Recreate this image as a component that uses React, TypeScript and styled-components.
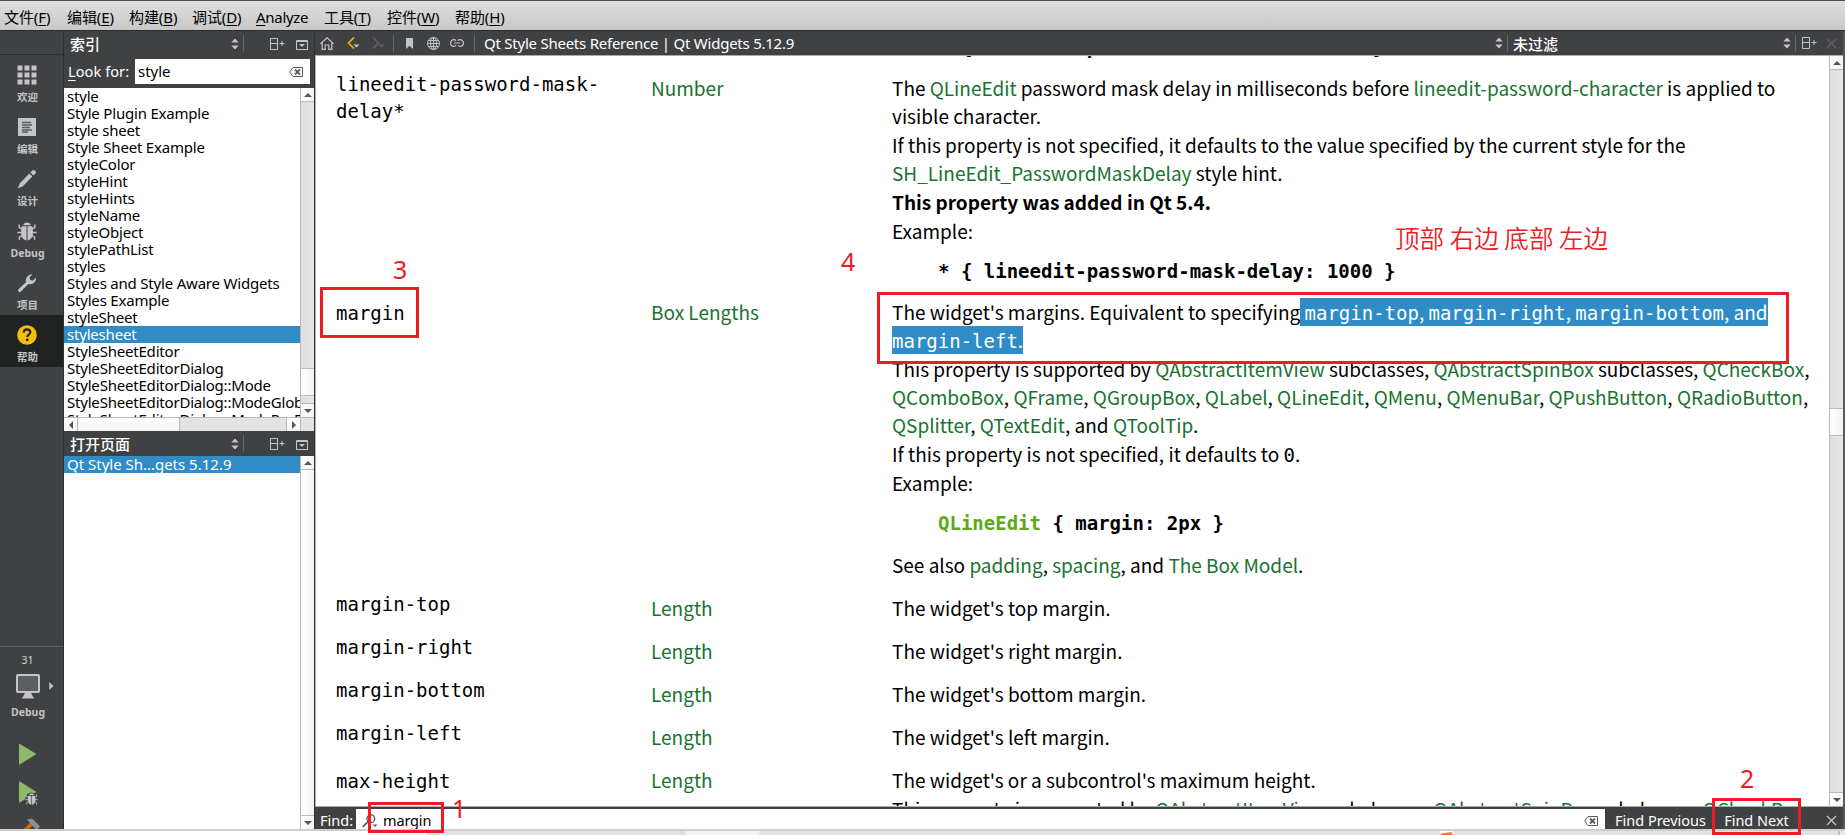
import React from "react";
import styled, { createGlobalStyle, css } from "styled-components";

const UI = `"Noto Sans", "Noto Sans CJK SC", sans-serif`;
const DOC = `"Noto Sans CJK SC", "Noto Sans", sans-serif`;
const MONO = `"DejaVu Sans Mono", "Liberation Mono", monospace`;
const DARK = "#404142";
const BLUE = "#308cc6";
const RED = "#ed1c24";

const GlobalStyle = createGlobalStyle`
  *, *::before, *::after { box-sizing: border-box; }
  html, body { margin: 0; padding: 0; background: #fff; }
  body { overflow: hidden; }
  svg { display: block; flex: none; }
`;

const Screen = styled.div`
  position: relative;
  width: 1845px;
  height: 835px;
  overflow: hidden;
  display: flex;
  flex-direction: column;
  font: 15px/17px ${UI};
  color: #000;
  background: #fff;
`;

/* ---------- menu bar ---------- */

const MenuBar = styled.nav`
  flex: none;
  height: 31px;
  display: flex;
  align-items: center;
  padding: 4px 0 0 4px;
  border-top: 1px solid #534a46;
  border-bottom: 1px solid #2a2b2c;
  background: linear-gradient(#dedede, #c8c8c8);
`;

const MenuItem = styled.span<{ $w: number; $ls?: number }>`
  width: ${(p) => p.$w}px;
  flex: none;
  white-space: nowrap;
  font-size: 15px;
  letter-spacing: ${(p) => p.$ls ?? 0}px;
  u { text-underline-offset: 2px; }
`;

/* ---------- window body ---------- */

const Body = styled.div`
  flex: none;
  height: 798px;
  display: flex;
  background: ${DARK};
  border-right: 2px solid #5b5a59;
`;

const ModeBar = styled.aside`
  flex: none;
  width: 64px;
  display: flex;
  flex-direction: column;
  border-right: 1px solid #2c2d2e;
  overflow: hidden;
`;

const ModeSpacer = styled.div`
  flex: none;
  height: 24px;
  border-bottom: 1px solid #2f3031;
`;

const Mode = styled.div<{ $active?: boolean }>`
  flex: none;
  height: 52px;
  display: flex;
  flex-direction: column;
  align-items: center;
  gap: 4px;
  padding: 10px 9px 0 0;
  background: ${(p) => (p.$active ? "#212322" : "transparent")};
`;

const ModeLabel = styled.span`
  flex: none;
  font-size: 10.5px;
  line-height: 16px;
  font-weight: 700;
  color: #c3c4c6;
  padding-left: 1px;
`;

const KitPanel = styled.div`
  flex: none;
  margin-top: auto;
  height: 183px;
  border-top: 1px solid #5d5e5f;
  display: flex;
  flex-direction: column;
  align-items: center;
  padding: 5px 8px 0 0;
  overflow: hidden;
`;

const KitName = styled.span`
  flex: none;
  font-size: 10.5px;
  line-height: 16px;
  color: #d6d7d8;
`;

const KitRow = styled.div`
  flex: none;
  width: 55px;
  height: 36px;
  display: flex;
  align-items: center;
  justify-content: flex-end;
  gap: 9px;
  padding-right: 1px;
`;

const RunButton = styled.div<{ $h: number }>`
  flex: none;
  height: ${(p) => p.$h}px;
  display: flex;
  align-items: center;
`;

/* ---------- side panel ---------- */

const SidePanel = styled.section`
  flex: none;
  width: 251px;
  display: flex;
  flex-direction: column;
  border-right: 1px solid #2f3132;
`;

const PanelHead = styled.header`
  flex: none;
  height: 25px;
  display: flex;
  align-items: center;
  padding: 0 6px 0 6px;
  color: #fff;
`;

const PanelTitle = styled.span`
  flex: 1;
  font-size: 15px;
  font-weight: 500;
  line-height: 22px;
  padding-top: 1px;
`;

const Divider = styled.i<{ $m?: string }>`
  flex: none;
  width: 1px;
  height: 17px;
  margin: ${(p) => p.$m ?? "0"};
  background: #666769;
`;

const IconSlot = styled.span<{ $m?: string }>`
  flex: none;
  display: flex;
  margin: ${(p) => p.$m ?? "0"};
`;

const LookFor = styled.div`
  flex: none;
  height: 32px;
  display: flex;
  align-items: center;
  padding: 0 4px 1px 4px;
  color: #fff;
  u { text-underline-offset: 3px; }
`;

const LookLabel = styled.label`
  width: 67px;
  font-size: 14.5px;
  letter-spacing: 0.1px;
  white-space: nowrap;
`;

const Field = styled.div`
  flex: 1;
  height: 25px;
  display: flex;
  align-items: center;
  justify-content: space-between;
  padding: 0 7px 0 3px;
  background: #fff;
  color: #000;
`;

const ListFrame = styled.div<{ $h: number }>`
  flex: none;
  height: ${(p) => p.$h}px;
  display: flex;
  background: #fff;
`;

const ListView = styled.div`
  flex: 1;
  min-width: 0;
  overflow: hidden;
`;

const ListItem = styled.div<{ $on?: boolean; $ls?: number }>`
  height: 17px;
  line-height: 17px;
  padding-left: 3px;
  white-space: nowrap;
  letter-spacing: ${(p) => p.$ls ?? -0.2}px;
  ${(p) => p.$on && css`background: ${BLUE}; color: #fff;`}
`;

/* ---------- scroll bars ---------- */

const VBar = styled.div`
  flex: none;
  width: 14px;
  display: flex;
  flex-direction: column;
  border-left: 1px solid #b9b9b9;
  background: linear-gradient(90deg, #dedede, #e6e6e6);
`;

const VButton = styled.div<{ $bottom?: boolean }>`
  flex: none;
  height: 14px;
  display: grid;
  place-items: center;
  background: linear-gradient(90deg, #fff, #f2f2f2);
  ${(p) => (p.$bottom ? "border-top" : "border-bottom")}: 1px solid #b9b9b9;
`;

const VTrack = styled.div<{ $h?: number }>`
  ${(p) => (p.$h ? `flex: none; height: ${p.$h}px;` : "flex: 1;")}
`;

const VThumb = styled.div<{ $h?: number; $plain?: boolean }>`
  ${(p) => (p.$h ? `flex: none; height: ${p.$h}px;` : "flex: 1;")}
  background: linear-gradient(90deg, #fff, #f2f2f2);
  border: solid #b9b9b9;
  border-width: ${(p) => (p.$plain ? "0" : "1px 0")};
`;

const HBar = styled.div`
  flex: none;
  height: 14px;
  display: flex;
  border-top: 1px solid #b9b9b9;
  background: #e3e3e3;
`;

const HPart = styled.div<{ $w: number; $raised?: boolean; $end?: boolean }>`
  flex: none;
  width: ${(p) => p.$w}px;
  display: grid;
  place-items: center;
  ${(p) =>
    p.$raised &&
    css`background: linear-gradient(#fff, #f3f3f3); border-right: 1px solid #b9b9b9;`}
  ${(p) => p.$end && css`border-left: 1px solid #b9b9b9;`}
`;

/* ---------- document ---------- */

const Main = styled.main`
  flex: 1;
  min-width: 0;
  display: flex;
  flex-direction: column;
`;

const Toolbar = styled.header`
  flex: none;
  height: 25px;
  display: flex;
  align-items: center;
  padding-left: 5px;
  color: #fff;
  border-bottom: 1px solid #a9aaaa;
`;

const PageTitle = styled.span<{ $ls?: number }>`
  flex: 1;
  font-size: 15px;
  line-height: 20px;
  white-space: nowrap;
  letter-spacing: ${(p) => p.$ls ?? 0}px;
`;

const FilterTitle = styled(PageTitle)`
  flex: none;
  width: 270px;
  padding-top: 2px;
  font-weight: 500;
`;

const Viewer = styled.div`
  flex: none;
  height: 750px;
  display: flex;
  background: #fff;
  border-left: 1px solid #b5b5b5;
`;

const Page = styled.article`
  flex: 1;
  min-width: 0;
  overflow: hidden;
  font: 19px/28px ${DOC};
`;

const Clipped = styled.div`
  height: 18px;
  display: flex;
  align-items: flex-start;
  overflow: hidden;
  padding-left: 622px;
  font: 700 19px/28px ${MONO};
  white-space: pre;
  span { margin-top: -23px; }
`;

const Row = styled.div<{ $h: number }>`
  height: ${(p) => p.$h}px;
  display: grid;
  grid-template-columns: 315px 241px 1fr;
  padding-left: 20px;
`;

const Prop = styled.div<{ $up?: number }>`
  font: 19px/27px ${MONO};
  white-space: pre;
  margin-top: ${(p) => -(p.$up ?? 0)}px;
`;

const Line = styled.div<{ $h?: number; $b?: boolean }>`
  height: ${(p) => p.$h ?? 28}px;
  white-space: pre;
  font-weight: ${(p) => (p.$b ? 700 : 400)};
`;

const Link = styled.a`
  color: #17732f;
`;

const Code = styled.pre<{ $mt: number; $h: number }>`
  margin: ${(p) => p.$mt}px 0 0;
  height: ${(p) => p.$h}px;
  padding-left: 46px;
  font: 700 19px/28px ${MONO};
`;

const Tag = styled.span`
  color: #5caa15;
`;

const Mono = styled.code`
  font: 19px/20px ${MONO};
`;

const Selected = styled.span`
  background: ${BLUE};
  color: #fff;
  padding-bottom: 1px;
`;

/* ---------- find bar ---------- */

const FindBar = styled.div`
  flex: none;
  height: 23px;
  display: flex;
  align-items: stretch;
  border-top: 1px solid #a9aaaa;
  padding-top: 2px;
  color: #fff;
  font-size: 14.5px;
  line-height: 22px;
`;

const FindLabel = styled.span`
  width: 41px;
  padding-left: 5px;
  white-space: nowrap;
`;

const FindField = styled.div`
  flex: 1;
  display: flex;
  align-items: center;
  background: #fff;
  color: #000;
  padding: 2px 7px 0 6px;
  height: 21px;
`;

const FindText = styled.span`
  flex: 1;
  padding-left: 5px;
  line-height: 19px;
  letter-spacing: -0.15px;
`;

const FindAction = styled.span<{ $w: number }>`
  width: ${(p) => p.$w}px;
  flex: none;
  text-align: center;
  white-space: nowrap;
`;

/* ---------- strip below the window ---------- */

const Strip = styled.div`
  flex: none;
  height: 6px;
  display: flex;
  border-top: 2px solid #cfcfcf;
`;

const StripPart = styled.i<{ $w?: number; $c: string }>`
  ${(p) => (p.$w ? `flex: none; width: ${p.$w}px;` : "flex: 1;")}
  background: ${(p) => p.$c};
`;

const Scrap = styled(StripPart)`
  clip-path: polygon(0 100%, 8% 60%, 88% 25%, 100% 100%);
`;

/* ---------- red annotations laid over the window ---------- */

const Mark = styled.div<{ $x: number; $y: number; $w: number; $h: number }>`
  position: absolute;
  left: ${(p) => p.$x}px;
  top: ${(p) => p.$y}px;
  width: ${(p) => p.$w}px;
  height: ${(p) => p.$h}px;
  border: 3px solid ${RED};
`;

const Note = styled.div<{ $x: number; $y: number; $cjk?: boolean }>`
  position: absolute;
  left: ${(p) => p.$x}px;
  top: ${(p) => p.$y}px;
  color: ${RED};
  white-space: pre;
  ${(p) =>
    p.$cjk
      ? css`font: 350 24.6px/34px "Noto Sans CJK SC", sans-serif;`
      : css`font: 25px/34px "Noto Sans", sans-serif;`}
`;

/* ---------- icons ---------- */

const G = "#c3c4c6";

const UpDown = () => (
  <svg width="8" height="12" viewBox="0 0 8 12" fill={G}>
    <path d="M4 0.5 7.7 4.6H0.3zM4 11.5 0.3 7.4H7.7z" />
  </svg>
);
const SplitIcon = () => (
  <svg width="15" height="12" viewBox="0 0 15 12" fill="none" stroke={G}>
    <path d="M0.5 0.5H7.5V11.5H0.5zM0.5 5.5H7.5M9.5 5.5H14.5M12 3V8" />
  </svg>
);
const CollapseIcon = () => (
  <svg width="12" height="10" viewBox="0 0 12 10" fill="none" stroke={G}>
    <path d="M0.5 0.5H11.5V9.5H0.5zM0 1.5H12" />
    <path d="M3 4H9L6 7z" fill={G} stroke="none" />
  </svg>
);
const CrossIcon = ({ c }: { c: string }) => (
  <svg width="11" height="11" viewBox="0 0 11 11" stroke={c} strokeWidth="1.3">
    <path d="M1 1 10 10M10 1 1 10" />
  </svg>
);
const ClearIcon = () => (
  <svg width="14" height="10" viewBox="0 0 14 10" fill="none" stroke="#5a5a5a">
    <path d="M4 0.5H13.5V9.5H4L0.7 5z" />
    <path d="M6 2.5 11 7.5M11 2.5 6 7.5" strokeWidth="1.8" />
  </svg>
);
const HomeIcon = () => (
  <svg width="14" height="13" viewBox="0 0 14 13" fill="none" stroke={G} strokeWidth="1.2">
    <path d="M0.5 6.8 7 0.8 13.5 6.8M2.2 6V12.3H5.2V8H8.8V12.3H11.8V6" />
  </svg>
);
const BackIcon = ({ flip, c, a }: { flip?: boolean; c: string; a: string }) => (
  <svg width="13" height="12" viewBox="0 0 13 12" fill="none">
    <path d={flip ? "M1 0.5 6.5 6 1 11.5" : "M7 0.5 1.5 6 7 11.5"} stroke={c} strokeWidth="1.7" />
    <path d="M6.5 7.5H12.5L9.5 10.5z" fill={a} />
  </svg>
);
const BookmarkIcon = () => (
  <svg width="7" height="11" viewBox="0 0 7 11" fill={G}>
    <path d="M0 0H7V11L3.5 7.8 0 11z" />
  </svg>
);
const GlobeIcon = () => (
  <svg width="13" height="13" viewBox="0 0 13 13" fill="none" stroke={G}>
    <circle cx="6.5" cy="6.5" r="6" />
    <ellipse cx="6.5" cy="6.5" rx="3" ry="6" />
    <path d="M6.5 0.5V12.5M0.5 6.5H12.5M1.5 3.5H11.5M1.5 9.5H11.5" />
  </svg>
);
const LinkIcon = () => (
  <svg width="14" height="8" viewBox="0 0 14 8" fill="none" stroke={G} strokeWidth="1.2">
    <path d="M6 1.8C5.5 1 4.8 0.6 4 0.6A3.4 3.4 0 0 0 4 7.4C4.8 7.4 5.5 7 6 6.2M8 1.8C8.5 1 9.2 0.6 10 0.6A3.4 3.4 0 0 1 10 7.4C9.2 7.4 8.5 7 8 6.2M4 4H10" />
  </svg>
);
const MagnifierIcon = () => (
  <svg width="16" height="14" viewBox="0 0 16 14" fill="none" stroke="#5a5a5a" strokeWidth="1.3">
    <circle cx="8.8" cy="4.8" r="3.9" />
    <path d="M6 7.6 0.8 12.8" strokeWidth="1.8" />
    <path d="M10.5 10.5H15.5L13 13z" fill="#5a5a5a" stroke="none" />
  </svg>
);

const WelcomeIcon = () => (
  <svg width="20" height="20" viewBox="0 0 20 20" fill={G}>
    {[0.5, 7.5, 14.5].map((y) =>
      [0.5, 7.5, 14.5].map((x) => <rect key={`${x}-${y}`} x={x} y={y} width="5" height="5" />)
    )}
  </svg>
);
const EditIcon = () => (
  <svg width="20" height="20" viewBox="0 0 20 20">
    <path d="M1 1H19V19H1z" fill={G} />
    <path d="M5 5.5H14M5 8H15M5 10.5H13M5 13H15M5 15H11" stroke="#5a5b5c" strokeWidth="1.4" />
  </svg>
);
const DesignIcon = () => (
  <svg width="20" height="20" viewBox="0 0 20 20" fill={G}>
    <path d="M0.8 19.2 2.6 14.4 12.4 4.6 15.4 7.6 5.6 17.4zM13.4 3.6 15.8 1.2Q16.6 0.6 17.4 1.3L18.7 2.6Q19.4 3.4 18.8 4.2L16.4 6.6z" />
  </svg>
);
const BugShape = () => (
  <>
    <path d="M6.2 4.2A3.9 3.6 0 0 1 13.8 4.2z" fill={G} />
    <path d="M4.6 5.3H9.5V19.4C5.8 18.8 4 15.5 4 11.5zM15.4 5.3H10.5V19.4C14.2 18.8 16 15.5 16 11.5z" fill={G} />
    <path d="M5 8 2.2 6.6V3.6M4.8 11.5H0.4M5.2 14.5 2.4 16.2V18.8M15 8 17.8 6.6V3.6M15.2 11.5H19.6M14.8 14.5 17.6 16.2V18.8" stroke={G} strokeWidth="1.4" fill="none" />
  </>
);
const BugIcon = () => (
  <svg width="20" height="20" viewBox="0 0 20 20">
    <BugShape />
  </svg>
);
const WrenchIcon = () => (
  <svg width="20" height="20" viewBox="0 0 20 20">
    <path d="M1.2 16.4 9 9.2C8 5.5 10.5 1.4 15.4 1.2L12.6 4.2 13.2 7 16 7.4 19 4.6C19.4 9.4 15.2 12.2 11.4 11L3.8 18.8C2.4 19.8 0.2 17.8 1.2 16.4z" fill={G} />
  </svg>
);
const HelpIcon = () => (
  <svg width="20" height="20" viewBox="0 0 20 20">
    <circle cx="10" cy="10" r="9.8" fill="#f2bd0c" />
    <path d="M6.8 7.6C6.8 5.4 8.1 4.4 10 4.4S13.3 5.5 13.3 7.2C13.3 9.4 10.2 9.6 10.2 12" fill="none" stroke="#212322" strokeWidth="2.2" />
    <path d="M9 13.6H11.4V16H9z" fill="#212322" />
  </svg>
);
const MonitorIcon = () => (
  <svg width="24" height="25" viewBox="0 0 24 25">
    <rect x="1" y="1" width="22" height="17" rx="1" fill="#5d5e5f" stroke={G} strokeWidth="2" />
    <path d="M9 19H15L18 24.5H6z" fill={G} />
  </svg>
);
const ArrowRight = () => (
  <svg width="5" height="8" viewBox="0 0 5 8" fill={G}>
    <path d="M0.3 0 4.5 4 0.3 8z" />
  </svg>
);
const PlayIcon = () => (
  <svg width="20" height="24" viewBox="0 0 20 24">
    <path d="M1 1.5 18.5 12 1 23z" fill="#8fb96a" />
  </svg>
);
const PlayBugIcon = () => (
  <svg width="20" height="24" viewBox="0 0 20 24" overflow="visible">
    <path d="M1 1 18.5 12 1 23z" fill="#8fb96a" />
    <circle cx="13.5" cy="18.5" r="6" fill={DARK} />
    <g transform="translate(7.2 12.3) scale(.64)">
      <BugShape />
    </g>
  </svg>
);
const HammerIcon = () => (
  <svg width="22" height="14" viewBox="0 0 22 14" overflow="visible">
    <path d="M15 5.5 7 13.5" stroke="#c56a14" strokeWidth="4" />
    <path d="M10 1.5 15 0.5 23 8.5 19.5 12 15 7.2z" fill="#8e8f91" />
  </svg>
);
const Tri = ({ d }: { d: "u" | "d" | "l" | "r" }) => {
  const shapes = { u: "M0 6 4 2 8 6z", d: "M0 2H8L4 6z", l: "M6 0V8L2 4z", r: "M2 0V8L6 4z" };
  return (
    <svg width="8" height="8" viewBox="0 0 8 8" fill="#555">
      <path d={shapes[d]} />
    </svg>
  );
};

/* ---------- data ---------- */

const menus: [string, string, number][] = [
  ["文件", "F", 63],
  ["编辑", "E", 62],
  ["构建", "B", 63],
  ["调试", "D", 64],
];
const menusAfter: [string, string, number][] = [
  ["工具", "T", 63],
  ["控件", "W", 68],
  ["帮助", "H", 60],
];

const indexItems = [
  "style", "Style Plugin Example", "style sheet", "Style Sheet Example", "styleColor",
  "styleHint", "styleHints", "styleName", "styleObject", "stylePathList", "styles",
  "Styles and Style Aware Widgets", "Styles Example", "styleSheet", "stylesheet",
  "StyleSheetEditor", "StyleSheetEditorDialog", "StyleSheetEditorDialog::Mode",
  "StyleSheetEditorDialog::ModeGlobal", "StyleSheetEditorDialog::ModePerForm",
];

const lengths: [string, string, number][] = [
  ["margin-top", "top", 43],
  ["margin-right", "right", 43],
  ["margin-bottom", "bottom", 43],
  ["margin-left", "left", 43],
];

const MenuEntry = ({ m }: { m: [string, string, number] }) => (
  <MenuItem $w={m[2]} $ls={-0.1}>
    {m[0]}(<u>{m[1]}</u>)
  </MenuItem>
);

const Links = ({ names }: { names: string[] }) => (
  <>
    {names.map((n, i) => (
      <React.Fragment key={n}>
        <Link>{n}</Link>
        {i < names.length - 1 ? ", " : ","}
      </React.Fragment>
    ))}
  </>
);

const PanelTools = () => (
  <>
    <UpDown />
    <Divider $m="0 26px 0 4px" />
    <SplitIcon />
    <IconSlot $m="2px 0 0 11px">
      <CollapseIcon />
    </IconSlot>
  </>
);

export default function App() {
  return (
    <Screen>
      <GlobalStyle />
      <MenuBar>
        {menus.map((m) => <MenuEntry key={m[0]} m={m} />)}
        <MenuItem $w={68} $ls={-0.3}><u>A</u>nalyze</MenuItem>
        {menusAfter.map((m) => <MenuEntry key={m[0]} m={m} />)}
      </MenuBar>

      <Body>
        <ModeBar>
          <ModeSpacer />
          <Mode><WelcomeIcon /><ModeLabel>欢迎</ModeLabel></Mode>
          <Mode><EditIcon /><ModeLabel>编辑</ModeLabel></Mode>
          <Mode><DesignIcon /><ModeLabel>设计</ModeLabel></Mode>
          <Mode><BugIcon /><ModeLabel>Debug</ModeLabel></Mode>
          <Mode><WrenchIcon /><ModeLabel>项目</ModeLabel></Mode>
          <Mode $active><HelpIcon /><ModeLabel>帮助</ModeLabel></Mode>
          <KitPanel>
            <KitName>31</KitName>
            <KitRow><MonitorIcon /><ArrowRight /></KitRow>
            <ModeLabel>Debug</ModeLabel>
            <RunButton $h={68}><PlayIcon /></RunButton>
            <RunButton $h={8}><PlayBugIcon /></RunButton>
            <RunButton $h={58}><HammerIcon /></RunButton>
          </KitPanel>
        </ModeBar>

        <SidePanel>
          <PanelHead><PanelTitle>索引</PanelTitle><PanelTools /></PanelHead>
          <LookFor>
            <LookLabel><u>L</u>ook for:</LookLabel>
            <Field>style<ClearIcon /></Field>
          </LookFor>
          <ListFrame $h={329}>
            <ListView>
              {indexItems.map((t) => (
                <ListItem key={t} $on={t === "stylesheet"}>{t}</ListItem>
              ))}
            </ListView>
            <VBar>
              <VButton><Tri d="u" /></VButton>
              <VTrack />
              <VThumb $h={28} />
              <VTrack $h={7} />
              <VButton $bottom><Tri d="d" /></VButton>
            </VBar>
          </ListFrame>
          <HBar>
            <HPart $w={14} $raised><Tri d="l" /></HPart>
            <HPart $w={102} $raised />
            <HPart $w={106} />
            <HPart $w={15} $raised $end><Tri d="r" /></HPart>
          </HBar>
          <PanelHead><PanelTitle>打开页面</PanelTitle><PanelTools /></PanelHead>
          <ListFrame $h={373}>
            <ListView>
              <ListItem $on $ls={0}>Qt Style Sh…gets 5.12.9</ListItem>
            </ListView>
            <VBar>
              <VButton><Tri d="u" /></VButton>
              <VThumb $plain />
              <VButton $bottom><Tri d="d" /></VButton>
            </VBar>
          </ListFrame>
        </SidePanel>

        <Main>
          <Toolbar>
            <HomeIcon />
            <IconSlot $m="0 0 0 13px"><BackIcon c="#e6b117" a={G} /></IconSlot>
            <IconSlot $m="0 0 0 12px"><BackIcon flip c="#606163" a="#606163" /></IconSlot>
            <Divider $m="0 12px 0 8px" />
            <BookmarkIcon />
            <IconSlot $m="0 0 0 14px"><GlobeIcon /></IconSlot>
            <IconSlot $m="0 0 0 10px"><LinkIcon /></IconSlot>
            <Divider $m="0 9px 0 10px" />
            <PageTitle $ls={-0.24}>Qt Style Sheets Reference | Qt Widgets 5.12.9</PageTitle>
            <UpDown />
            <Divider $m="0 5px 0 4px" />
            <FilterTitle>未过滤</FilterTitle>
            <UpDown />
            <Divider $m="0 6px 0 4px" />
            <SplitIcon />
            <IconSlot $m="0 6px 0 9px"><CrossIcon c="#636466" /></IconSlot>
          </Toolbar>

          <Viewer>
            <Page>
              <Clipped><span>{"* { lineedit-password-character: 9679 }"}</span></Clipped>
              <Row $h={224}>
                <Prop $up={3}>{"lineedit-password-mask-\ndelay*"}</Prop>
                <Line><Link>Number</Link></Line>
                <div>
                  <Line>The <Link>QLineEdit</Link> password mask delay in milliseconds before <Link>lineedit-password-character</Link> is applied to</Line>
                  <Line $h={29}>visible character.</Line>
                  <Line>If this property is not specified, it defaults to the value specified by the current style for the</Line>
                  <Line $h={29}><Link>SH_LineEdit_PasswordMaskDelay</Link> style hint.</Line>
                  <Line $h={29} $b>This property was added in Qt 5.4.</Line>
                  <Line>Example:</Line>
                  <Code $mt={12} $h={29}>{"* { lineedit-password-mask-delay: 1000 }"}</Code>
                </div>
              </Row>
              <Row $h={296}>
                <Prop $up={-2}>margin</Prop>
                <Line><Link>Box Lengths</Link></Line>
                <div>
                  <Line>
                    The widget's margins. Equivalent to specifying
                    <Selected> <Mono>margin-top</Mono>, <Mono>margin-right</Mono>, <Mono>margin-bottom</Mono>, and</Selected>
                  </Line>
                  <Line $h={29}><Selected><Mono>margin-left</Mono>.</Selected></Line>
                  <Line>This property is supported by <Link>QAbstractItemView</Link> subclasses, <Link>QAbstractSpinBox</Link> subclasses, <Link>QCheckBox</Link>,</Line>
                  <Line><Links names={["QComboBox", "QFrame", "QGroupBox", "QLabel", "QLineEdit", "QMenu", "QMenuBar", "QPushButton", "QRadioButton"]} /></Line>
                  <Line $h={29}><Link>QSplitter</Link>, <Link>QTextEdit</Link>, and <Link>QToolTip</Link>.</Line>
                  <Line $h={29}>If this property is not specified, it defaults to <Mono>0</Mono>.</Line>
                  <Line>Example:</Line>
                  <Code $mt={12} $h={42}><Tag>QLineEdit</Tag>{" { margin: 2px }"}</Code>
                  <Line>See also <Link>padding</Link>, <Link>spacing</Link>, and <Link>The Box Model</Link>.</Line>
                </div>
              </Row>
              {lengths.map(([name, side, h]) => (
                <Row key={name} $h={h}>
                  <Prop $up={3}>{name}</Prop>
                  <Line><Link>Length</Link></Line>
                  <Line>The widget's {side} margin.</Line>
                </Row>
              ))}
              <Row $h={80}>
                <Prop $up={-2}>max-height</Prop>
                <Line><Link>Length</Link></Line>
                <div>
                  <Line $h={29}>The widget's or a subcontrol's maximum height.</Line>
                  <Line>This property is supported by <Link>QAbstractItemView</Link> subclasses, <Link>QAbstractSpinBox</Link> subclasses, <Link>QCheckBox</Link>,</Line>
                </div>
              </Row>
            </Page>
            <VBar>
              <VButton><Tri d="u" /></VButton>
              <VTrack $h={338} />
              <VThumb $h={28} />
              <VTrack />
              <VButton $bottom><Tri d="d" /></VButton>
            </VBar>
          </Viewer>

          <FindBar>
            <FindLabel>Find:</FindLabel>
            <FindField>
              <MagnifierIcon />
              <FindText>margin</FindText>
              <ClearIcon />
            </FindField>
            <FindAction $w={111}>Find Previous</FindAction>
            <FindAction $w={81}>Find Next</FindAction>
            <IconSlot $m="6px 6px 0 29px"><CrossIcon c={G} /></IconSlot>
          </FindBar>
        </Main>
      </Body>

      <Strip>
        <StripPart $w={427} $c="#fff" />
        <StripPart $w={259} $c="#e1e1e1" />
        <StripPart $w={73} $c="#f3f3f3" />
        <StripPart $w={681} $c="#e1e2e2" />
        <Scrap $w={13} $c="#f2764a" />
        <StripPart $w={385} $c="#e1e3e3" />
        <StripPart $w={2} $c="#bdbdbd" />
        <StripPart $c="#e8e8e8" />
      </Strip>

      <Mark $x={320} $y={287} $w={99} $h={51} />
      <Mark $x={877} $y={292} $w={912} $h={72} />
      <Mark $x={368} $y={802} $w={76} $h={31} />
      <Mark $x={1712} $y={798} $w={89} $h={37} />
      <Note $x={452} $y={791}>1</Note>
      <Note $x={1740} $y={761}>2</Note>
      <Note $x={393} $y={252}>3</Note>
      <Note $x={841} $y={244}>4</Note>
      <Note $x={1395} $y={220} $cjk>顶部 右边 底部 左边</Note>
    </Screen>
  );
}
